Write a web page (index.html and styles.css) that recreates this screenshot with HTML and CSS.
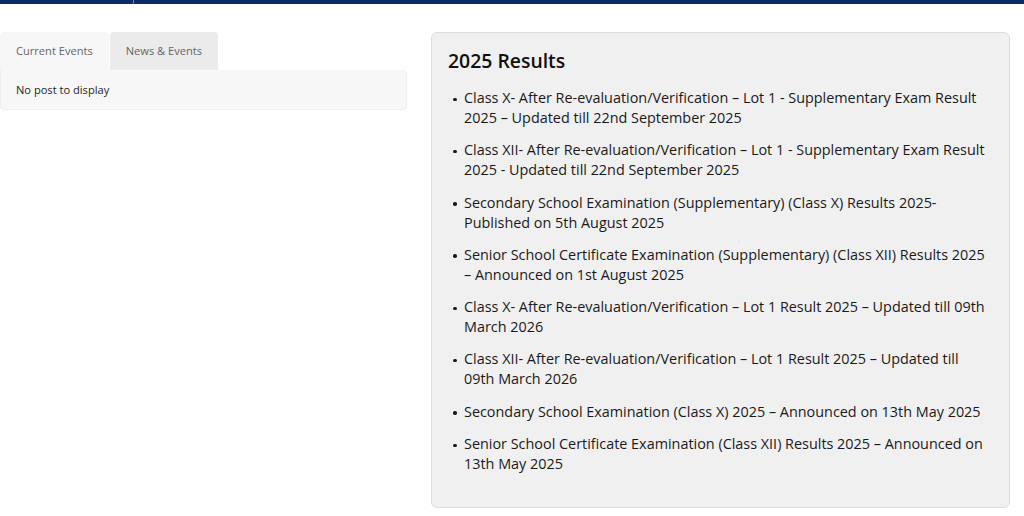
FILE: index.html
```html
<!DOCTYPE html>
<html lang="en">
<head>
<meta charset="utf-8">
<title>Results</title>
<link rel="stylesheet" href="styles.css">
</head>
<body>
<div class="topbar"><span class="topbar-left"></span><span class="topbar-right"></span></div>
<main class="content">
  <section class="events">
    <div class="tabs">
      <div class="tab tab-active">Current Events</div>
      <div class="tab">News &amp; Events</div>
    </div>
    <div class="tab-panel">No post to display</div>
  </section>
  <section class="results">
    <h2 class="results-title">2025 Results</h2>
    <ul class="results-list">
      <li>Class X- After Re-evaluation/Verification – Lot 1 - Supplementary Exam Result 2025 – Updated till 22nd September 2025</li>
      <li>Class XII- After Re-evaluation/Verification – Lot 1 - Supplementary Exam Result 2025 - Updated till 22nd September 2025</li>
      <li>Secondary School Examination (Supplementary) (Class X) Results 2025- Published on 5th August 2025</li>
      <li>Senior School Certificate Examination (Supplementary) (Class XII) Results 2025 – Announced on 1st August 2025</li>
      <li>Class X- After Re-evaluation/Verification – Lot 1 Result 2025 – Updated till 09th March 2026</li>
      <li>Class XII- After Re-evaluation/Verification – Lot 1 Result 2025 – Updated till 09th March 2026</li>
      <li>Secondary School Examination (Class X) 2025 – Announced on 13th May 2025</li>
      <li>Senior School Certificate Examination (Class XII) Results 2025 – Announced on 13th May 2025</li>
    </ul>
  </section>
</main>
</body>
</html>
```
FILE: styles.css
```css
html, body {
  margin: 0;
  padding: 0;
  background: #ffffff;
  font-family: "Open Sans", "Noto Sans", sans-serif;
  color: #222;
}

.topbar {
  display: flex;
  height: 4px;
  background: #0b2b65;
}
.topbar-left {
  width: 133px;
  border-right: 1px solid #6f83a8;
}
.topbar-right {
  flex: 1;
}

.content {
  display: flex;
  align-items: flex-start;
  gap: 24px;
  padding: 28px 14px 0 0;
}

.events {
  width: 407px;
  flex: none;
}

.tabs {
  display: flex;
}
.tab {
  height: 38px;
  line-height: 38px;
  padding: 0 16px;
  font-size: 11.1px;
  color: #666;
  background: #ebebeb;
  border-radius: 4px 4px 0 0;
  white-space: nowrap;
}
.tab-active {
  background: #f7f7f7;
}
.tab + .tab {
  margin-left: 1px;
}

.tab-panel {
  background: #f7f7f7;
  border: 1px solid #efefef;
  border-top: none;
  border-radius: 0 4px 4px 4px;
  padding: 12px 15px 11px;
  font-size: 11.1px;
  line-height: 16px;
  color: #1e1e1e;
}

.results {
  flex: 1;
  background: #f0f0f0;
  border: 1px solid #dcdcdc;
  border-radius: 6px;
  padding: 16px 19px 33px 16px;
}

.results-title {
  margin: 0 0 15px;
  font-size: 19.4px;
  line-height: 24px;
  font-weight: 600;
  color: #111;
}

.results-list {
  margin: 0;
  padding: 0 0 0 16px;
  list-style: none;
  font-size: 14.4px;
  line-height: 20px;
  color: #1a1a1a;
}
.results-list li {
  position: relative;
}
.results-list li::before {
  content: "";
  position: absolute;
  left: -11px;
  top: 9.5px;
  width: 3.5px;
  height: 3.5px;
  border-radius: 50%;
  background: #1a1a1a;
}
.results-list li + li {
  margin-top: 12.3px;
}
```
